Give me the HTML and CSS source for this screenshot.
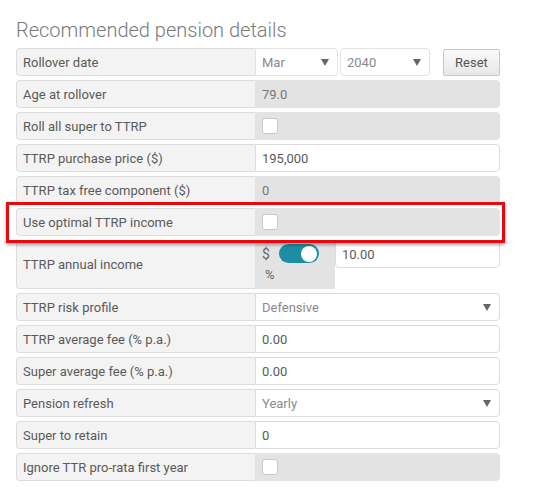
FILE: index.html
```html
<!DOCTYPE html>
<html>
<head>
<meta charset="utf-8">
<link rel="stylesheet" href="styles.css">
</head>
<body>
<div class="panel">
  <h1 class="title">Recommended pension details</h1>
  <div class="rows">
    <div class="row">
      <div class="label">Rollover date</div>
      <div class="value split">
        <div class="select sel-month"><span class="ph">Mar</span><span class="arrow"></span></div>
        <div class="select sel-year"><span class="ph">2040</span><span class="arrow"></span></div>
        <div class="btn">Reset</div>
      </div>
    </div>
    <div class="row">
      <div class="label">Age at rollover</div>
      <div class="value field disabled">79.0</div>
    </div>
    <div class="row">
      <div class="label">Roll all super to TTRP</div>
      <div class="value field disabled"><span class="check"></span></div>
    </div>
    <div class="row">
      <div class="label">TTRP purchase price ($)</div>
      <div class="value field">195,000</div>
    </div>
    <div class="row">
      <div class="label">TTRP tax free component ($)</div>
      <div class="value field disabled">0</div>
    </div>
    <div class="row highlighted">
      <div class="label">Use optimal TTRP income</div>
      <div class="value field disabled"><span class="check"></span></div>
    </div>
    <div class="row tall">
      <div class="label">TTRP annual income</div>
      <div class="value split-income">
        <div class="toggle-cell">
          <div class="toggle-line"><span class="sym">$</span><span class="switch"><span class="knob"></span></span></div>
          <div class="pct">%</div>
        </div>
        <div class="field income-input">10.00</div>
      </div>
    </div>
    <div class="row">
      <div class="label">TTRP risk profile</div>
      <div class="value field select-full"><span class="ph">Defensive</span><span class="arrow"></span></div>
    </div>
    <div class="row">
      <div class="label">TTRP average fee (% p.a.)</div>
      <div class="value field">0.00</div>
    </div>
    <div class="row">
      <div class="label">Super average fee (% p.a.)</div>
      <div class="value field">0.00</div>
    </div>
    <div class="row">
      <div class="label">Pension refresh</div>
      <div class="value field select-full"><span class="ph">Yearly</span><span class="arrow"></span></div>
    </div>
    <div class="row">
      <div class="label">Super to retain</div>
      <div class="value field">0</div>
    </div>
    <div class="row">
      <div class="label">Ignore TTR pro-rata first year</div>
      <div class="value field disabled"><span class="check"></span></div>
    </div>
  </div>
</div>
</body>
</html>
```

FILE: styles.css
```css
* { box-sizing: border-box; }
html, body { margin: 0; padding: 0; background: #fff; }
body {
  font-family: Roboto, "Liberation Sans", Arial, sans-serif;
  font-size: 13px;
  color: #5a5a5a;
}
.panel {
  width: 500px;
  padding: 21px 0 0 16px;
}
.title {
  margin: 0 0 8px 0;
  font-weight: 300;
  font-size: 20px;
  line-height: 19px;
  color: #7a7a7a;
}
.rows {
  display: flex;
  flex-direction: column;
  gap: 4px;
}
.row {
  display: flex;
  height: 28px;
  position: relative;
}
.row.tall { height: 49px; }
.label {
  width: 239px;
  flex: none;
  background: #f3f3f3;
  border: 1px solid #dcdcdc;
  border-right: none;
  border-radius: 4px 0 0 4px;
  padding: 0 6px;
  display: flex;
  align-items: center;
  color: #5a5a5a;
}
.value {
  flex: 1;
  display: flex;
  align-items: center;
}
.field {
  background: #fff;
  border: 1px solid #dcdcdc;
  border-radius: 0 4px 4px 0;
  padding: 0 6px;
  color: #5a5a5a;
}
.field.disabled {
  background: #e3e3e3;
  border-color: #e3e3e3;
  color: #777;
}
.check {
  width: 16px;
  height: 16px;
  background: #fff;
  border: 1px solid #c8c8c8;
  border-radius: 3px;
  display: block;
}
.split { gap: 0; }
.select {
  height: 28px;
  background: #fff;
  border: 1px solid #e2e2e2;
  border-radius: 4px;
  display: flex;
  align-items: center;
  justify-content: space-between;
  padding: 0 8px 0 6px;
}
.sel-month { width: 83px; border-radius: 0 4px 4px 0; }
.sel-year { width: 90px; margin-left: 2px; }
.ph { color: #8a8a8a; }
.arrow {
  width: 0; height: 0;
  border-left: 4.5px solid transparent;
  border-right: 4.5px solid transparent;
  border-top: 7px solid #666;
  margin-top: 1px;
}
.select-full {
  justify-content: space-between;
  padding-right: 8px;
}
.btn {
  margin-left: 13px;
  width: 57px;
  height: 27px;
  border: 1px solid #c6c6c6;
  border-radius: 2px;
  background: linear-gradient(#fafafa, #e8e8e8);
  display: flex;
  align-items: center;
  justify-content: center;
  color: #555;
}
.split-income { align-items: stretch; }
.toggle-cell {
  width: 80px;
  flex: none;
  background: #e3e3e3;
  padding: 4px 0 0 7px;
}
.toggle-line {
  display: flex;
  align-items: center;
  gap: 9px;
  height: 19px;
}
.sym { color: #666; font-size: 14px; }
.switch {
  width: 40px;
  height: 19px;
  background: #1b8ea3;
  border-radius: 10px;
  position: relative;
  display: block;
}
.knob {
  position: absolute;
  right: 2px;
  top: 1.5px;
  width: 16px;
  height: 16px;
  border-radius: 50%;
  background: #fff;
}
.pct {
  margin: 4px 0 0 3px;
  color: #666;
  font-size: 13px;
}
.income-input {
  flex: 1;
  height: 28px;
  border-radius: 4px;
  display: flex;
  align-items: center;
  padding-left: 6px;
}
.highlighted { z-index: 1; }
.highlighted::after {
  content: "";
  position: absolute;
  left: -10px;
  right: -5px;
  top: -6px;
  bottom: -7px;
  border: 3px solid #e8090f;
  box-shadow: 0 2px 3px rgba(0,0,0,0.35);
  pointer-events: none;
}
```
